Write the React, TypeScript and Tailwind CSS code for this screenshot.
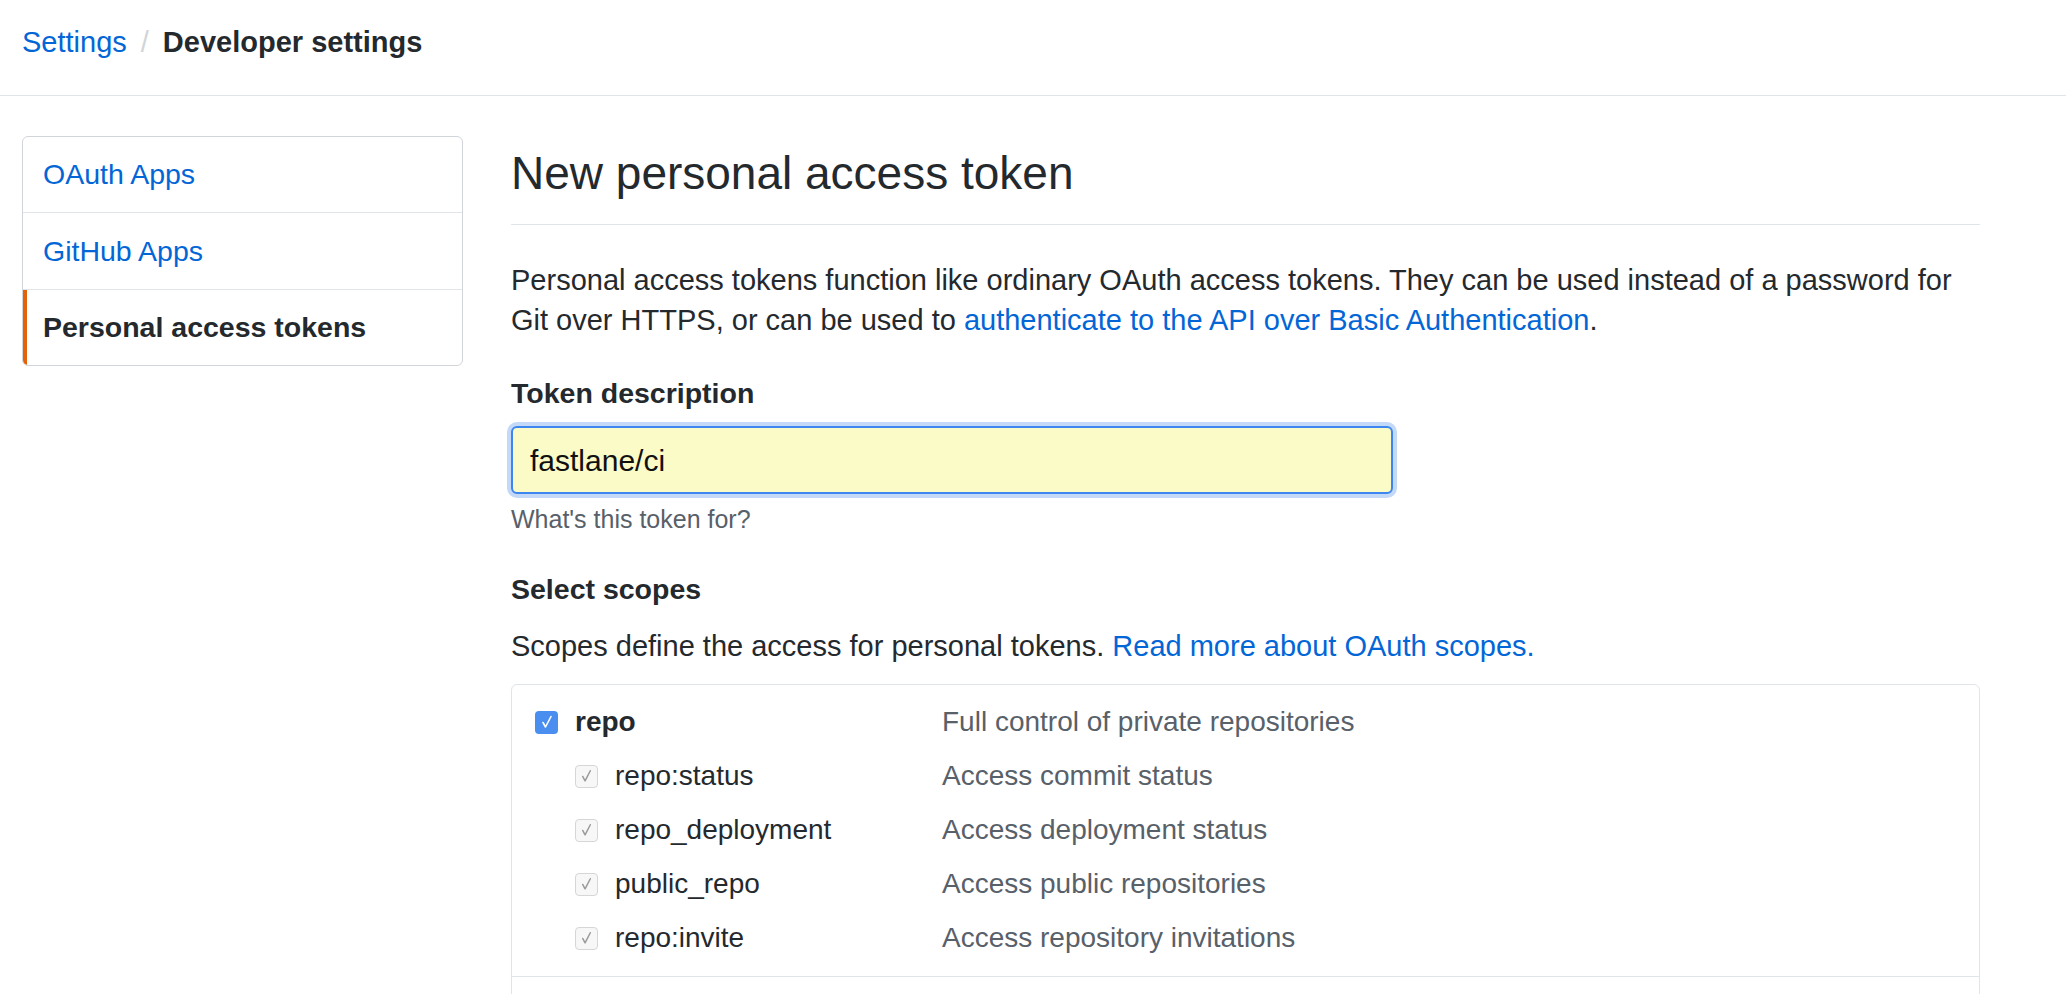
import React from 'react';

const font = { fontFamily: '"Liberation Sans", Arial, sans-serif' };

type Scope = { name: string; desc: string; sub?: boolean };

const scopes: Scope[] = [
  { name: 'repo', desc: 'Full control of private repositories' },
  { name: 'repo:status', desc: 'Access commit status', sub: true },
  { name: 'repo_deployment', desc: 'Access deployment status', sub: true },
  { name: 'public_repo', desc: 'Access public repositories', sub: true },
  { name: 'repo:invite', desc: 'Access repository invitations', sub: true },
];

const Check: React.FC<{ sub?: boolean }> = ({ sub }) => (
  <span
    className={
      sub
        ? 'flex h-[23px] w-[23px] shrink-0 items-center justify-center rounded-[4px] border border-[#d6d6d6] bg-[#f7f7f7]'
        : 'flex h-[23px] w-[23px] shrink-0 items-center justify-center rounded-[4px] bg-[#4a8ef0]'
    }
  >
    <svg width="22" height="22" viewBox="0 0 22 22" fill="none">
      <polyline
        points="7,11.5 9.5,16 15,5.5"
        stroke={sub ? '#9b9b9b' : '#ffffff'}
        strokeWidth="1.6"
        strokeLinecap="round"
        strokeLinejoin="round"
      />
    </svg>
  </span>
);

const App: React.FC = () => {
  return (
    <div className="min-h-screen bg-white text-[#24292e]" style={font}>
      {/* breadcrumb */}
      <div className="h-[96px] border-b border-[#e1e4e8] pl-[22px] pt-[22px]">
        <div className="flex items-center text-[29px] leading-[40px]">
          <span className="text-[#0366d6]">Settings</span>
          <span className="mx-[14px] text-[#d1d5da]">/</span>
          <span className="font-bold">Developer settings</span>
        </div>
      </div>

      <div className="flex pl-[22px] pt-[40px]">
        {/* sidebar */}
        <div className="w-[441px] shrink-0 self-start overflow-hidden rounded-[6px] border border-[#d1d5da] text-[28.5px]">
          <div className="flex h-[76px] items-center border-b border-[#e1e4e8] pl-[20px] text-[#0366d6]">OAuth Apps</div>
          <div className="flex h-[77px] items-center border-b border-[#e1e4e8] pl-[20px] text-[#0366d6]">GitHub Apps</div>
          <div className="flex h-[75px] items-center border-l-4 border-[#e36209] pl-[16px] font-bold">Personal access tokens</div>
        </div>

        {/* main */}
        <div className="ml-[48px] w-[1469px]">
          <h1 className="border-b border-[#e1e4e8] pb-[23px] pt-[9px] text-[46px] font-normal leading-[56px]">
            New personal access token
          </h1>

          <p className="mt-[36px] whitespace-nowrap text-[29px] leading-[39.5px]">
            Personal access tokens function like ordinary OAuth access tokens. They can be used instead of a password for
            <br />
            Git over HTTPS, or can be used to{' '}
            <span className="text-[#0366d6]">authenticate to the API over Basic Authentication</span>.
          </p>

          <div className="mt-[33px] text-[28.5px] font-bold leading-[40px]">Token description</div>
          <div className="mt-[13px] flex h-[68px] w-[882px] items-center rounded-[6px] border-2 border-[#3d85f0] bg-[#fafbc6] pl-[17px] text-[30px] text-[#111] shadow-[0_0_0_4px_rgba(60,130,230,0.3)]">
            fastlane/ci
          </div>
          <div className="mt-[8px] text-[25px] leading-[34px] text-[#586069]">What's this token for?</div>

          <div className="mt-[33px] text-[28.5px] font-bold leading-[40px]">Select scopes</div>
          <div className="mt-[17px] text-[29px] leading-[40px]">
            Scopes define the access for personal tokens.{' '}
            <span className="text-[#0366d6]">Read more about OAuth scopes.</span>
          </div>

          <div className="mt-[18px] rounded-[6px] border border-[#e1e4e8]">
            <div className="pb-[11px] pt-[10px]">
              {scopes.map((s) => (
                <div key={s.name} className="flex h-[54px] items-center pl-[23px] text-[28px]">
                  <div className={s.sub ? 'flex w-[407px] items-center gap-[17px] pl-[40px]' : 'flex w-[407px] items-center gap-[17px]'}>
                    <Check sub={s.sub} />
                    <span className={s.sub ? '' : 'font-bold'}>{s.name}</span>
                  </div>
                  <span className="text-[#586069]">{s.desc}</span>
                </div>
              ))}
            </div>
            <div className="h-[40px] border-t border-[#e1e4e8]" />
          </div>
        </div>
      </div>
    </div>
  );
};

export default App;
